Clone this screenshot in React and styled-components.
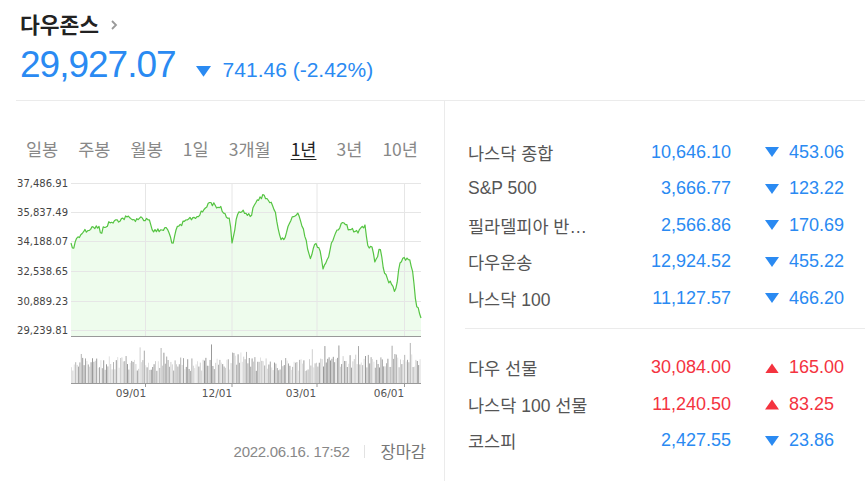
import React from 'react';
import styled, { createGlobalStyle } from 'styled-components';

const GlobalStyle = createGlobalStyle`
  body {
    margin: 0;
    background: #fff;
    font-family: "Liberation Sans", "Noto Sans CJK KR", sans-serif;
  }
`;

const BLUE = '#2a8af2';
const RED = '#f4333f';

const Page = styled.div`
  width: 865px;
  height: 481px;
  overflow: hidden;
`;

const Header = styled.div`
  padding: 9px 0 0 20px;
  height: 100px;
  box-sizing: border-box;
`;

const Title = styled.div`
  display: flex;
  align-items: center;
  gap: 11px;
  height: 28px;
  font-size: 21.5px;
  font-weight: bold;
  color: #222;
`;

const PriceRow = styled.div`
  display: flex;
  align-items: baseline;
  margin-top: 6px;
  color: ${BLUE};
`;

const BigPrice = styled.span`
  font-size: 37px;
  line-height: 44px;
  letter-spacing: -1px;
`;

const BigChange = styled.span`
  display: flex;
  align-items: baseline;
  gap: 12px;
  margin-left: 20px;
  font-size: 21px;
`;

const Main = styled.div`
  margin-left: 16px;
  border-top: 1px solid #ebebeb;
  display: grid;
  grid-template-columns: 429px 1fr;
  height: 381px;
`;

const LeftCol = styled.div`
  border-right: 1px solid #ebebeb;
  padding-top: 37px;
`;

const Tabs = styled.div`
  display: flex;
  justify-content: space-between;
  padding: 0 26px 0 10px;
  height: 22px;
  font-family: "Noto Sans CJK KR", sans-serif;
`;

const Tab = styled.span`
  font-size: 17.5px;
  line-height: 22px;
  color: ${p => (p.$active ? '#222' : '#888')};
  text-decoration: ${p => (p.$active ? 'underline' : 'none')};
  text-underline-offset: 3px;
`;

const ChartSvg = styled.svg`
  display: block;
  margin-top: 10px;
`;

const Footer = styled.div`
  display: flex;
  justify-content: flex-end;
  align-items: center;
  gap: 15px;
  padding-right: 18px;
  margin-top: 37px;
  font-size: 15px;
  color: #888;
`;

const Stamp = styled.span`
  letter-spacing: -0.3px;
`;

const Sep = styled.span`
  width: 1px;
  height: 13px;
  background: #e2e2e2;
`;

const Closed = styled.span`
  font-family: "Noto Sans CJK KR", sans-serif;
  font-size: 16.5px;
  color: #777;
`;

const RightCol = styled.div`
  padding-top: 33px;
`;

const Group = styled.div`
  padding-left: 23px;
  padding-top: ${p => (p.$first ? '0' : '21px')};
  padding-bottom: ${p => (p.$first ? '11px' : '0')};
`;

const Divider = styled.div`
  margin-left: 20px;
  height: 1px;
  background: #ebebeb;
`;

const Row = styled.div`
  display: grid;
  grid-template-columns: 126px 137px 1fr;
  align-items: center;
  height: 36.5px;
  font-size: 18px;
`;

const Name = styled.span`
  font-size: 17.5px;
  color: #555;
  white-space: nowrap;
  overflow: hidden;
  text-overflow: ellipsis;
`;

const Value = styled.span`
  text-align: right;
  color: ${p => (p.$up ? RED : BLUE)};
`;

const Change = styled.span`
  display: flex;
  align-items: center;
  gap: 10px;
  padding-left: 34px;
  color: ${p => (p.$up ? RED : BLUE)};
`;

const Arrow = ({ up, size = 14 }) => (
  <svg width={size} height={size * 0.75} viewBox="0 0 14 10.5">
    {up
      ? <polygon points="7,0.5 14,10.5 0,10.5" fill={RED} />
      : <polygon points="0,0 14,0 7,10" fill={BLUE} />}
  </svg>
);

const Chevron = () => (
  <svg width="8" height="12" viewBox="0 0 8 12" style={{ marginTop: 3 }}>
    <path d="M2 2 L6 6 L2 10" stroke="#999" strokeWidth="1.8" fill="none" />
  </svg>
);

// seeded random so the picture is the same every run
const rng = (() => {
  let s = 12345;
  return () => {
    s = (s * 1103515245 + 12345) % 2147483648;
    return s / 2147483648;
  };
})();

const keys = [
  [71, 243], [73, 250], [77, 237], [83, 232], [93, 227], [100, 228], [101, 240], [103, 227],
  [110, 223], [127, 217], [132, 220], [140, 218], [150, 220], [153, 232], [162, 230],
  [167, 228], [173, 244], [176, 230], [187, 220], [200, 215], [210, 202], [220, 208],
  [230, 220], [232, 243], [237, 215], [243, 210], [250, 217], [257, 200], [264, 195],
  [270, 203], [275, 210], [280, 237], [285, 238], [292, 217], [298, 213], [303, 227],
  [310, 260], [315, 243], [320, 250], [323, 269], [328, 260], [332, 240], [337, 230],
  [343, 222], [350, 230], [358, 233], [365, 225], [368, 247], [372, 247], [375, 263],
  [380, 247], [383, 267], [387, 278], [392, 285], [395, 293], [400, 263], [403, 258],
  [410, 260], [413, 273], [416, 305], [418, 307], [421, 318],
];

const interp = x => {
  for (let i = 0; i < keys.length - 1; i++) {
    const [x0, y0] = keys[i];
    const [x1, y1] = keys[i + 1];
    if (x >= x0 && x <= x1) return y0 + ((y1 - y0) * (x - x0)) / (x1 - x0);
  }
  return keys[keys.length - 1][1];
};

const linePts = [];
for (let x = 71; x <= 421; x += 1.4) {
  const isKey = keys.some(k => Math.abs(k[0] - x) < 0.7);
  const n = isKey ? 0 : (rng() - 0.5) * 5;
  linePts.push([x, interp(x) + n]);
}
linePts.push([421, 318]);

const linePath = linePts.map((p, i) => `${i ? 'L' : 'M'}${p[0].toFixed(1)} ${p[1].toFixed(1)}`).join(' ');
const areaPath = `${linePath} L421 336 L71 336 Z`;

const shades = ['#9a9a9a', '#b4b4b4', '#cfcfcf', '#e0e0e0', '#a8a8a8'];
const bars = [];
for (let i = 0; i < 250; i++) {
  const x = 71.5 + i * 1.4;
  let h = 12 + rng() * 14;
  if (x > 230 && x < 250) h += 6;
  if (x > 320 && x < 345) h += 4;
  if (x > 345) h += 3;
  if (rng() < 0.07) h += 10 + rng() * 8;
  if (h > 42) h = 42;
  bars.push({ x, h, c: shades[Math.floor(rng() * shades.length)] });
}

const yLabels = [
  ['37,486.91', 183], ['35,837.49', 212], ['34,188.07', 241],
  ['32,538.65', 271], ['30,889.23', 301], ['29,239.81', 330],
];
const vGrid = [145.5, 232, 317, 404.5];
const xLabels = [['09/01', 131], ['12/01', 217], ['03/01', 301], ['06/01', 389]];

const Chart = () => (
  <ChartSvg width="429" height="232" viewBox="16 170 429 232">
    <path d={areaPath} fill="#eefced" />
    {yLabels.map(([t, y]) => (
      <g key={t}>
        <line x1="71" x2="421" y1={y + 0.5} y2={y + 0.5} stroke="#e6e6e6" />
        <text x="68" y={y + 4} textAnchor="end" fontFamily="DejaVu Sans" fontSize="10" fill="#444">{t}</text>
      </g>
    ))}
    {vGrid.map(x => (
      <line key={x} x1={x} x2={x} y1="183" y2="336" stroke="#e6e6e6" />
    ))}
    <path d={linePath} fill="none" stroke="#55c442" strokeWidth="1.2" strokeLinejoin="round" />
    <line x1="71" x2="421" y1="336.5" y2="336.5" stroke="#999" />
    {bars.map((b, i) => (
      <line key={i} x1={b.x} x2={b.x} y1="383" y2={383 - b.h} stroke={b.c} strokeWidth="1" />
    ))}
    <line x1="71" x2="421" y1="383.5" y2="383.5" stroke="#999" />
    {vGrid.map(x => (
      <line key={'t' + x} x1={x} x2={x} y1="383" y2="387" stroke="#999" />
    ))}
    {xLabels.map(([t, x]) => (
      <text key={t} x={x} y="397" textAnchor="middle" fontFamily="DejaVu Sans" fontSize="10.5" fill="#555">{t}</text>
    ))}
  </ChartSvg>
);

const tabs = ['일봉', '주봉', '월봉', '1일', '3개월', '1년', '3년', '10년'];

const indices = [
  { name: '나스닥 종합', value: '10,646.10', change: '453.06' },
  { name: 'S&P 500', value: '3,666.77', change: '123.22' },
  { name: '필라델피아 반도체', value: '2,566.86', change: '170.69' },
  { name: '다우운송', value: '12,924.52', change: '455.22' },
  { name: '나스닥 100', value: '11,127.57', change: '466.20' },
];

const futures = [
  { name: '다우 선물', value: '30,084.00', change: '165.00', up: true },
  { name: '나스닥 100 선물', value: '11,240.50', change: '83.25', up: true },
  { name: '코스피', value: '2,427.55', change: '23.86' },
];

const IndexRow = ({ item }) => (
  <Row>
    <Name>{item.name}</Name>
    <Value $up={item.up}>{item.value}</Value>
    <Change $up={item.up}>
      <Arrow up={item.up} />
      {item.change}
    </Change>
  </Row>
);

export default function App() {
  return (
    <Page>
      <GlobalStyle />
      <Header>
        <Title>다우존스 <Chevron /></Title>
        <PriceRow>
          <BigPrice>29,927.07</BigPrice>
          <BigChange>
            <Arrow size={15} />
            <span>741.46 (-2.42%)</span>
          </BigChange>
        </PriceRow>
      </Header>
      <Main>
        <LeftCol>
          <Tabs>
            {tabs.map(t => <Tab key={t} $active={t === '1년'}>{t}</Tab>)}
          </Tabs>
          <Chart />
          <Footer>
            <Stamp>2022.06.16. 17:52</Stamp>
            <Sep />
            <Closed>장마감</Closed>
          </Footer>
        </LeftCol>
        <RightCol>
          <Group $first>
            {indices.map(it => <IndexRow key={it.name} item={it} />)}
          </Group>
          <Divider />
          <Group>
            {futures.map(it => <IndexRow key={it.name} item={it} />)}
          </Group>
        </RightCol>
      </Main>
    </Page>
  );
}
